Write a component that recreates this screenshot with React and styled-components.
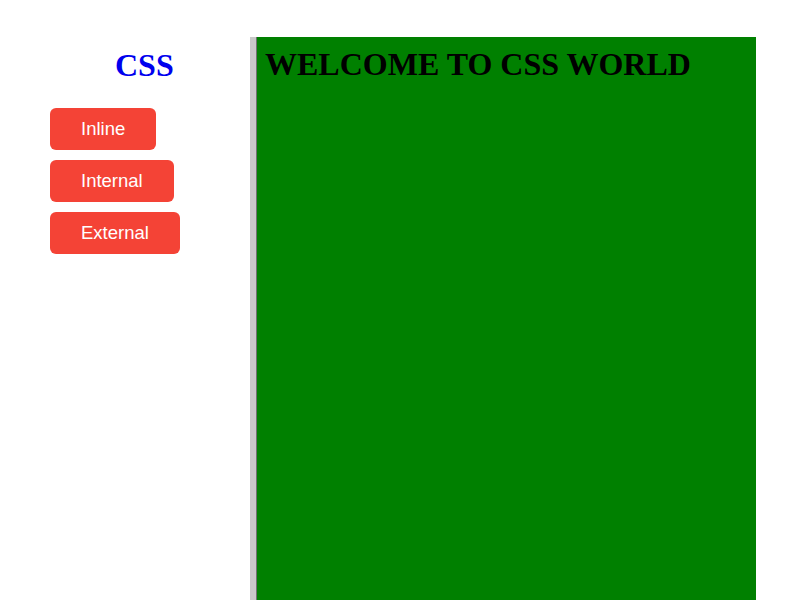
import React from "react";
import styled, { createGlobalStyle } from "styled-components";

const GlobalStyle = createGlobalStyle`
  body {
    margin: 0;
    background: #fff;
    font-family: "Liberation Serif", "Times New Roman", serif;
  }
`;

const Page = styled.div`
  display: flex;
  align-items: flex-start;
  padding-top: 37px;
  height: 563px;
  overflow: hidden;
`;

const Sidebar = styled.aside`
  width: 200px;
  padding-left: 50px;
  display: flex;
  flex-direction: column;
  align-items: flex-start;
`;

const Title = styled.h2`
  margin: 10px 0 25px 65px;
  font-size: 32px;
  font-weight: bold;
  line-height: 36px;
  color: #0000ee;
`;

const Menu = styled.div`
  display: flex;
  flex-direction: column;
  align-items: flex-start;
  gap: 10px;
`;

const MenuButton = styled.button`
  height: 42px;
  padding: 0 31px;
  border: none;
  border-radius: 6px;
  background-color: #f44336;
  color: #fff;
  font-family: "Liberation Sans", Arial, sans-serif;
  font-size: 18.5px;
  cursor: pointer;
`;

const Content = styled.main`
  box-sizing: border-box;
  width: 506px;
  height: 700px;
  background-color: #008000;
  border-left: 6px solid #c8c8c8;
  box-shadow: inset 1px 0 0 #707070;
  padding: 0 9px;
`;

const Heading = styled.h1`
  margin: 8px 0 0;
  font-size: 32px;
  line-height: 38px;
  font-weight: bold;
  color: #000;
`;

const items = ["Inline", "Internal", "External"];

const App = () => {
  return (
    <>
      <GlobalStyle />
      <Page>
        <Sidebar>
          <Title>CSS</Title>
          <Menu>
            {items.map((item) => (
              <MenuButton key={item} type="button">
                {item}
              </MenuButton>
            ))}
          </Menu>
        </Sidebar>
        <Content>
          <Heading>WELCOME TO CSS WORLD</Heading>
        </Content>
      </Page>
    </>
  );
};

export default App;
